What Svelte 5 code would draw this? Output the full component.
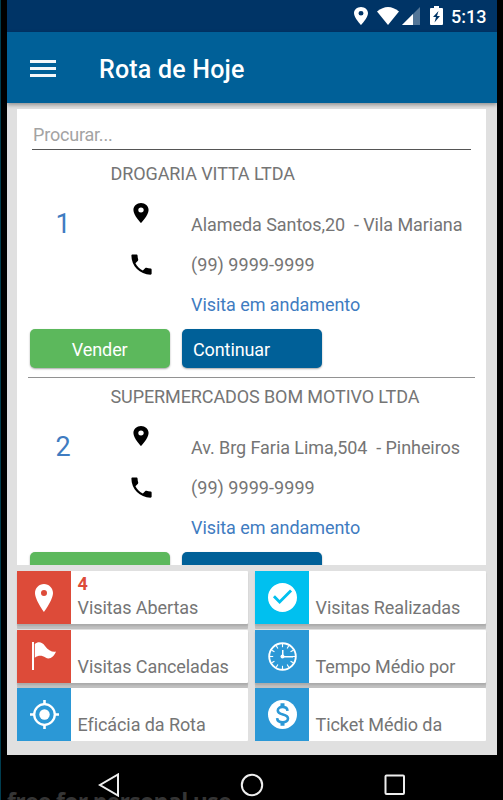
<script>
  const visits = [
    { n: 1, name: 'DROGARIA VITTA LTDA', address: 'Alameda Santos,20\u00a0 - Vila Mariana' },
    { n: 2, name: 'SUPERMERCADOS BOM MOTIVO LTDA', address: 'Av. Brg Faria Lima,504\u00a0 - Pinheiros' }
  ];
  const tiles = [
    { icon: 'pin', color: '#dd4b39', value: '4', label: 'Visitas Abertas' },
    { icon: 'check', color: '#00c0ef', value: '', label: 'Visitas Realizadas' },
    { icon: 'flag', color: '#dd4b39', value: '', label: 'Visitas Canceladas' },
    { icon: 'clock', color: '#2b98d6', value: '', label: 'Tempo Médio por' },
    { icon: 'target', color: '#2b98d6', value: '', label: 'Eficácia da Rota' },
    { icon: 'money', color: '#2b98d6', value: '', label: 'Ticket Médio da' }
  ];
  const ticks = [...Array(12).keys()].map((i) => i * 30);
  const pin = 'M12 2C8.13 2 5 5.13 5 9c0 5.25 7 13 7 13s7-7.75 7-13c0-3.87-3.13-7-7-7zm0 9.5a2.5 2.5 0 1 1 0-5 2.5 2.5 0 0 1 0 5z';
</script>

<div class="device">
  <div class="screen">
    <div class="status">
      <svg class="s-pin" width="14" height="18" viewBox="5 2 14 20" preserveAspectRatio="none"><path d={pin} /></svg>
      <svg class="s-wifi" width="22" height="18" viewBox="0 0 22 18"><path d="M0 4.6Q11-4.4 22 4.6L11 18z" /></svg>
      <svg class="s-cell" width="18" height="18" viewBox="0 0 18 18"><path d="M18 0V18H0z" opacity=".32" /><path d="M11 7V18H0z" /></svg>
      <svg class="s-bat" width="13" height="19" viewBox="0 0 13 19"><path fill-rule="evenodd" d="M4 0h5v2h3q1 0 1 1v15q0 1-1 1H1q-1 0-1-1V3q0-1 1-1h3zM8.5 5L3 11h3l-1.5 5.5L10 10H7z" /></svg>
      <span class="time">5:13</span>
    </div>
    <header>
      <div class="menu"><i></i><i></i><i></i></div>
      <h1>Rota de Hoje</h1>
    </header>
    <main>
      <section class="list">
        <div class="search">Procurar...</div>
        {#each visits as v}
          <article>
            <h2>{v.name}</h2>
            <div class="info">
              <div class="num">{v.n}</div>
              <div class="icons">
                <svg width="26" height="24" viewBox="0 0 24 24" preserveAspectRatio="none"><path d={pin} /></svg>
                <svg width="27" height="27" viewBox="0 0 24 24"><path d="M6.62 10.79c1.44 2.83 3.76 5.14 6.59 6.59l2.2-2.2c.27-.27.67-.36 1.02-.24 1.12.37 2.33.57 3.57.57.55 0 1 .45 1 1V20c0 .55-.45 1-1 1C10.61 21 3 13.39 3 4c0-.55.45-1 1-1h3.5c.55 0 1 .45 1 1 0 1.25.2 2.45.57 3.57.11.35.03.74-.25 1.02z" /></svg>
              </div>
              <div class="lines">
                <p>{v.address}</p>
                <p class="phone">(99) 9999-9999</p>
                <p class="state">Visita em andamento</p>
              </div>
            </div>
            <div class="actions">
              <div class="btn green">Vender</div>
              <div class="btn blue">Continuar</div>
            </div>
          </article>
        {/each}
      </section>
      <section class="tiles">
        {#each tiles as t}
          <div class="tile">
            <div class="badge" style="background:{t.color}">
              {#if t.icon === 'pin'}
                <svg width="18" height="28" viewBox="0 0 18 28"><path fill-rule="evenodd" d="M9 0C4 0 0 4 0 9c0 6.8 9 19 9 19s9-12.200 9-19c0-5-4-9-9-9zm0 12a3 3 0 1 1 0-6 3 3 0 0 1 0 6z" /></svg>
              {:else if t.icon === 'check'}
                <svg width="29" height="29" viewBox="2 2 20 20"><path d="M12 2C6.48 2 2 6.48 2 12s4.480 10 10 10 10-4.480 10-10S17.520 2 12 2zm-2 14.500l-4.600-4.600 1.400-1.400L10 13.700l7.200-7.200 1.400 1.400z" /></svg>
              {:else if t.icon === 'flag'}
                <svg width="26" height="28" viewBox="0 0 26 28"><path d="M1 0h2v28H1zM3.800 2C7-.6 11-.4 14 4c3 4.500 8 6.500 11 5.500-2 5.500-6.500 8.500-10.500 6-3.500-2.200-7-2.500-10.700.2z" /></svg>
              {:else if t.icon === 'clock'}
                <svg width="29" height="29" viewBox="0 0 29 29">
                  <circle cx="14.5" cy="14.500" r="13.300" fill="none" stroke="#fff" stroke-width="1.900" />
                  {#each ticks as a}<path d="M14.500 2v3.200" stroke="#fff" stroke-width="1.100" transform="rotate({a} 14.500 14.500)" />{/each}
                  <circle cx="14.500" cy="14.500" r="2" /><path d="M14 8h1.500v6H25v1.500H14z" />
                </svg>
              {:else if t.icon === 'target'}
                <svg width="29" height="29" viewBox="0 0 29 29">
                  <circle cx="14.500" cy="14.500" r="10.300" fill="none" stroke="#fff" stroke-width="2.300" /><circle cx="14.500" cy="14.500" r="5.200" />
                  <path d="M14.500 0v5M14.500 24v5M0 14.500h5M24 14.500h5" stroke="#fff" stroke-width="2.600" />
                </svg>
              {:else}
                <svg width="29" height="29" viewBox="0 0 29 29"><circle cx="14.500" cy="14.500" r="14.500" /><path d="M14.500 3.200v3.500M14.500 22.300v3.500" stroke="#2b98d6" stroke-width="4" /><path d="M19.500 10.800C19.200 5.700 9.800 5.500 9.800 10.500c0 5.300 10.200 2.700 10.200 8 0 5-10.500 5-10.900-.4" fill="none" stroke="#2b98d6" stroke-width="2.600" /></svg>
              {/if}
            </div>
            <div class="caption">{#if t.value}<b>{t.value}</b>{/if}<span>{t.label}</span></div>
          </div>
        {/each}
      </section>
    </main>
    <nav>
      <svg width="22" height="24" viewBox="0 0 22 24"><path d="M20 1.500V22.500L2 12z" /></svg>
      <svg width="24" height="24" viewBox="0 0 24 24"><circle cx="12" cy="12" r="10.200" /></svg>
      <svg width="22" height="22" viewBox="0 0 22 22"><rect x="1.500" y="1.500" width="18.500" height="18.500" rx="1" /></svg>
      <div class="watermark">free for personal use</div>
    </nav>
  </div>
</div>

<style>
  :global(body) { margin: 0; background: #000; overflow: hidden; }
  .device { width: 503px; height: 800px; box-sizing: border-box; padding: 0 6px 0 7px; overflow: hidden; background: linear-gradient(90deg, #003d50 1px, #000 1px); font-family: Roboto, sans-serif; color: #757575; }
  svg { display: block; flex: none; }
  h1, h2, p { margin: 0; font-weight: 400; white-space: nowrap; }
  .screen { width: 490px; height: 800px; display: flex; flex-direction: column; }
  .status { height: 32px; background: #003466; display: flex; align-items: flex-start; fill: #fff; color: #fff; flex: none; }
  .s-pin { margin: 7px 0 0 347px; }
  .s-wifi { margin: 7px 0 0 9px; }
  .s-cell { margin: 7px 0 0 3px; }
  .s-bat { margin: 6px 0 0 10px; }
  .time { margin-left: 8px; font-size: 18px; line-height: 33px; font-weight: 500; }
  header { height: 71px; flex: none; background: #006098; display: flex; align-items: center; box-shadow: 0 2px 4px rgba(0,0,0,.35); position: relative; }
  .menu { width: 26px; margin: 1px 0 0 23px; display: flex; flex-direction: column; gap: 4px; }
  .menu i { height: 3px; background: #f3f7fa; }
  h1 { color: #fff; font-size: 25px; font-weight: 500; letter-spacing: .2px; margin: 5px 0 0 43px; line-height: 30px; }
  main { height: 652px; flex: none; box-sizing: border-box; background: #e0e0e0; padding: 6px 11px 0 10px; }
  .list { height: 456px; background: #fff; overflow: hidden; }
  .search { margin: 0 15px; height: 41px; box-sizing: border-box; border-bottom: 1px solid #555; padding: 15px 0 0 1px; font-size: 18px; line-height: 22px; letter-spacing: -.2px; color: #a3a3a3; }
  article { height: 228px; box-sizing: border-box; margin: 0 11px; padding-top: 13px; border-bottom: 1px solid #929292; }
  article + article { padding-top: 8px; height: 223px; }
  h2 { margin-left: 82.500px; font-size: 18px; line-height: 22px; letter-spacing: -.1px; }
  .info { display: flex; height: 144px; }
  .num { width: 70px; text-align: center; font-size: 27px; line-height: 32px; padding-top: 23px; color: #3f7cc1; }
  .icons { width: 86px; display: flex; flex-direction: column; align-items: center; padding-top: 16px; gap: 26px; fill: #000; }
  .lines { padding: 29px 0 0 7px; display: flex; flex-direction: column; gap: 18px; font-size: 18px; line-height: 22px; letter-spacing: -.06px; }
  .phone { letter-spacing: .05px; }
  .state { color: #3f7cc1; }
  .actions { display: flex; gap: 12.500px; padding-left: 2px; }
  .btn { width: 139.500px; height: 39px; border-radius: 5px; box-shadow: 0 1px 2px rgba(0,0,0,.35); color: #fff; font-size: 18px; line-height: 40px; box-sizing: border-box; padding-top: 1px; letter-spacing: -.1px; }
  .green { background: #5cb85c; text-align: center; }
  .blue { background: #006098; padding-left: 11px; }
  .tiles { padding-top: 6px; display: grid; grid-template-columns: 231px 231px; column-gap: 7px; grid-auto-rows: 53.300px; row-gap: 5.300px; }
  .tile { background: #fff; display: flex; border-radius: 1px; }
  .tile:nth-child(-n+4) { box-shadow: 0 2px 2px rgba(0,0,0,.12), 0 5px 0 #c1c1c1; }
  .badge { width: 54px; display: flex; align-items: center; justify-content: center; fill: #fff; flex: none; }
  .caption { padding: 3px 0 5px 6.500px; font-size: 18px; white-space: nowrap; display: flex; flex-direction: column; justify-content: flex-end; letter-spacing: -.08px; }
  .caption b { display: block; height: 20px; line-height: 20px; margin-bottom: 3px; color: #dd4b39; }
  .caption span { display: block; line-height: 22px; }
  nav { height: 45px; flex: none; display: flex; background: #000; position: relative; overflow: hidden; }
  nav svg { fill: none; stroke: #eee; stroke-width: 2; margin-top: 18px; z-index: 1; }
  nav svg:nth-child(1) { margin-left: 91px; }
  nav svg:nth-child(2) { margin-left: 120px; }
  nav svg:nth-child(3) { margin: 19px 0 0 120px; }
  .watermark { position: absolute; left: 0; top: 32px; font: bold 23px/28px "Open Sans", sans-serif; letter-spacing: -.7px; color: #353535; white-space: nowrap; }
</style>
